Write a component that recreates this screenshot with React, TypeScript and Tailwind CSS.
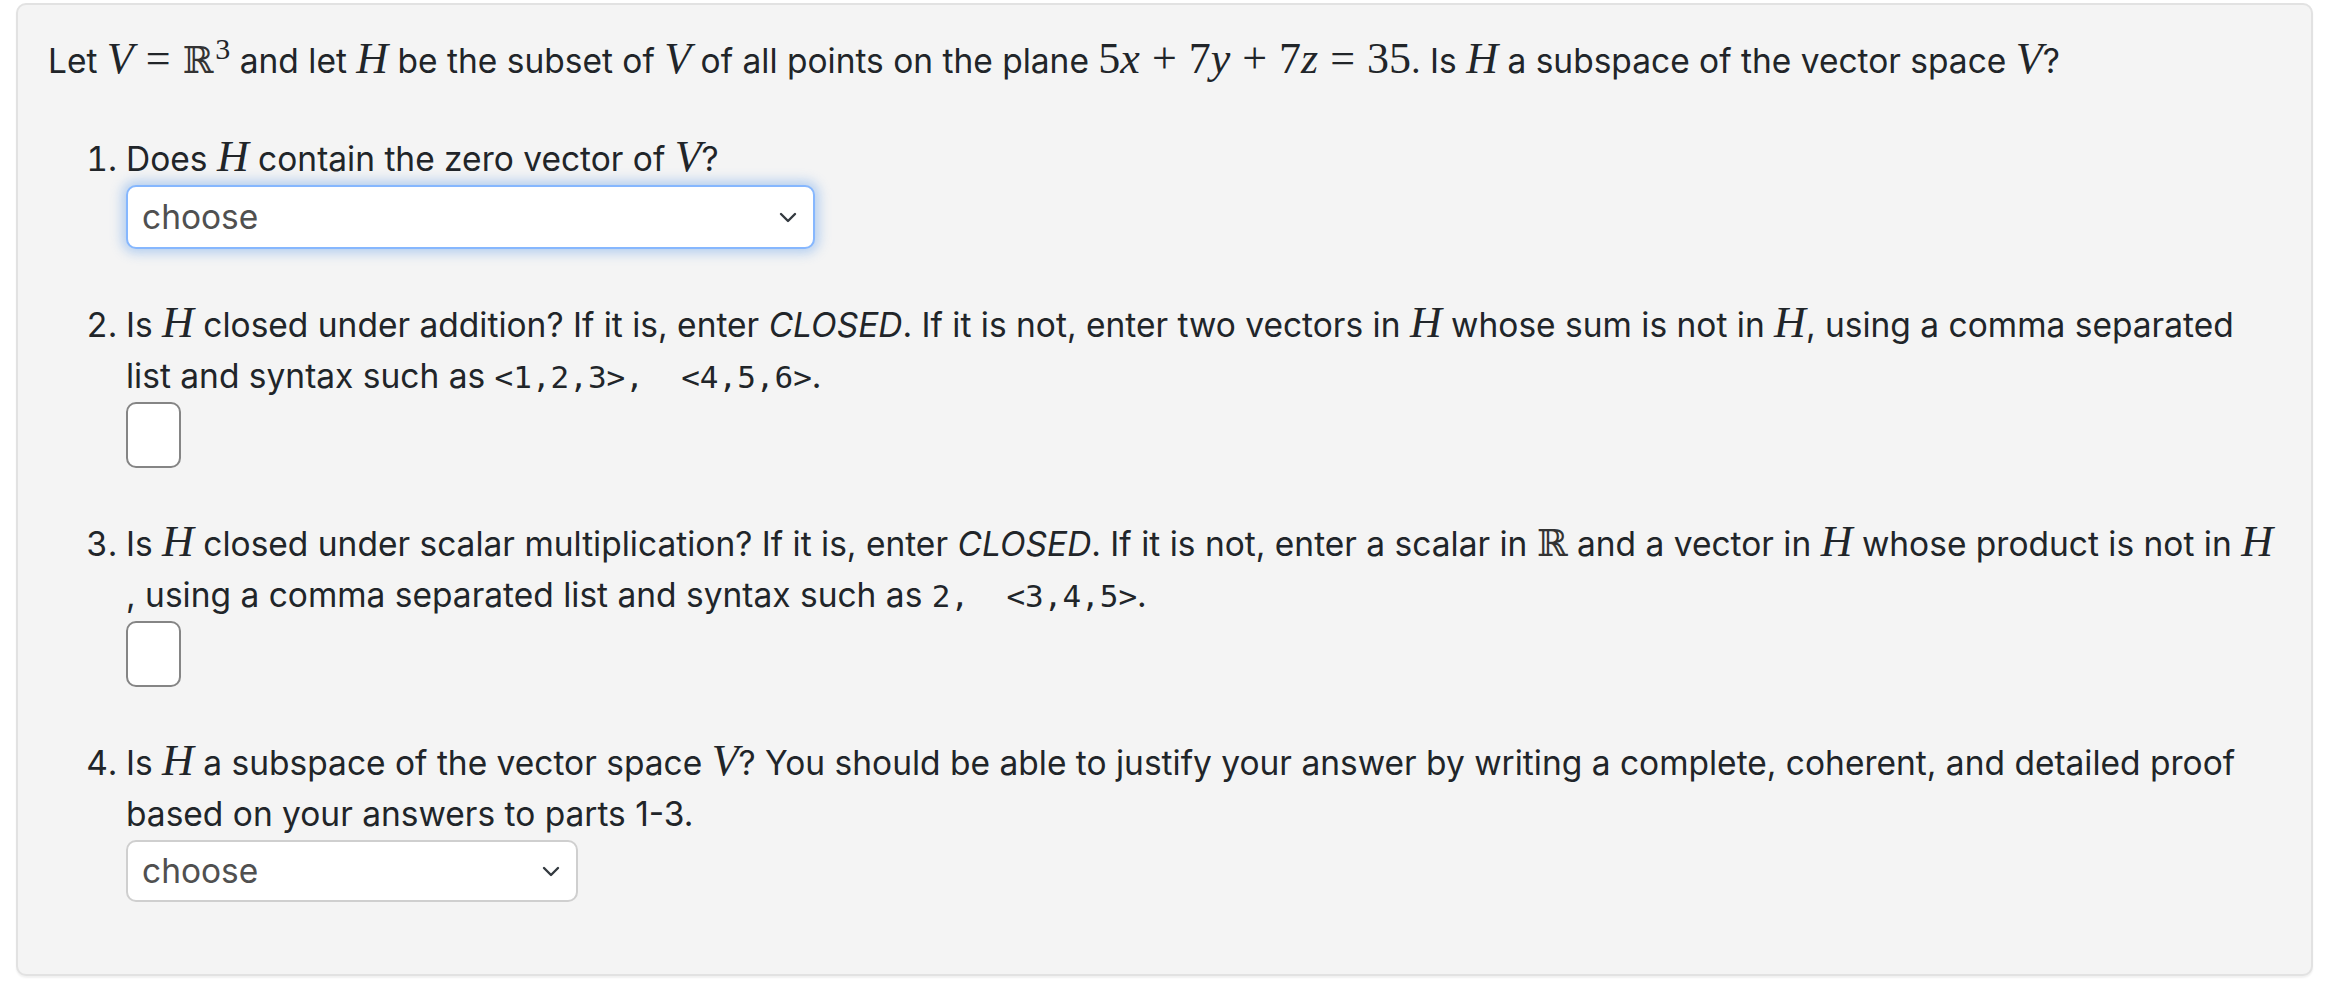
import React from 'react';

// math variable (MathJax-like italic serif)
function V({ children }: { children: React.ReactNode }) {
  return <span className="font-['Liberation_Serif',serif] italic text-[44px] leading-[0]">{children}</span>;
}

// upright math (numbers)
function U({ children }: { children: React.ReactNode }) {
  return <span className="font-['Liberation_Serif',serif] text-[44px] leading-[0]">{children}</span>;
}

function Op({ children }: { children: React.ReactNode }) {
  return <span className="mx-[12px] font-['Liberation_Serif',serif] text-[44px] leading-[0]">{children}</span>;
}

function Reals() {
  return <span className="font-['DejaVu_Serif',serif] text-[37px] leading-[0] text-[#333]">ℝ</span>;
}

function Code({ children }: { children: React.ReactNode }) {
  return <span className="font-['DejaVu_Sans_Mono',monospace] text-[31px] leading-[0] whitespace-pre">{children}</span>;
}

function Chevron() {
  return (
    <svg width="18" height="12" viewBox="0 0 18 12" fill="none" stroke="#343a40" strokeWidth="2.4" strokeLinecap="round" strokeLinejoin="round">
      <path d="M2 3l7 7 7-7" />
    </svg>
  );
}

function Select({ width, focused }: { width: string; focused?: boolean }) {
  return (
    <div
      className={`flex items-center justify-between rounded-[10px] border-2 bg-white pl-[14px] pr-[16px] text-[#505050] ${width} ${
        focused ? 'h-[64px] border-[#86b7fe] shadow-[0_0_12px_4px_rgba(100,160,235,0.45)]' : 'h-[62px] border-[#cfcfcf]'
      }`}
    >
      <span>choose</span>
      <Chevron />
    </div>
  );
}

function Box() {
  return <div className="h-[66px] w-[55px] rounded-[10px] border-2 border-[#858585] bg-white" />;
}

export default function App() {
  return (
    <div className="min-h-screen bg-white pt-[3px] font-['Inter','Helvetica_Neue',sans-serif] text-[#212529]">
      <div className="mx-[16px] w-[2297px] rounded-[10px] border-2 border-[#e2e2e2] bg-[#f4f4f4] px-[30px] pb-[72px] pt-[31px] text-[33.5px] leading-[51px] shadow-[0_2px_2px_rgba(0,0,0,0.06)]">
        <p>
          Let <V>V</V>
          <Op>=</Op>
          <Reals />
          <span className="relative -top-[14px] ml-[2px] font-['Liberation_Serif',serif] text-[30px] leading-[0]">3</span> and let{' '}
          <V>H</V> be the subset of <V>V</V> of all points on the plane <U>5</U>
          <V>x</V>
          <Op>+</Op>
          <U>7</U>
          <V>y</V>
          <Op>+</Op>
          <U>7</U>
          <V>z</V>
          <Op>=</Op>
          <U>35</U>. Is <V>H</V> a subspace of the vector space <V>V</V>?
        </p>

        <ol className="mt-[47px] list-decimal pl-[78px]">
          <li className="mb-[51px]">
            Does <V>H</V> contain the zero vector of <V>V</V>?
            <Select width="w-[689px]" focused />
          </li>
          <li className="mb-[51px]">
            Is <V>H</V> closed under addition? If it is, enter <i>CLOSED</i>. If it is not, enter two vectors in <V>H</V> whose sum
            is not in <V>H</V>, using a comma separated
            <br />
            list and syntax such as <Code>{'<1,2,3>,  <4,5,6>'}</Code>.
            <Box />
          </li>
          <li className="mb-[51px]">
            <span className="whitespace-nowrap">
              Is <V>H</V> closed under scalar multiplication? If it is, enter <i>CLOSED</i>. If it is not, enter a scalar in <Reals />{' '}
              and a vector in <V>H</V> whose product is not in <V>H</V>
            </span>
            <br />, using a comma separated list and syntax such as <Code>{'2,  <3,4,5>'}</Code>.
            <Box />
          </li>
          <li>
            Is <V>H</V> a subspace of the vector space <V>V</V>? You should be able to justify your answer by writing a complete,
            coherent, and detailed proof
            <br />
            based on your answers to parts 1-3.
            <Select width="w-[452px]" />
          </li>
        </ol>
      </div>
    </div>
  );
}
